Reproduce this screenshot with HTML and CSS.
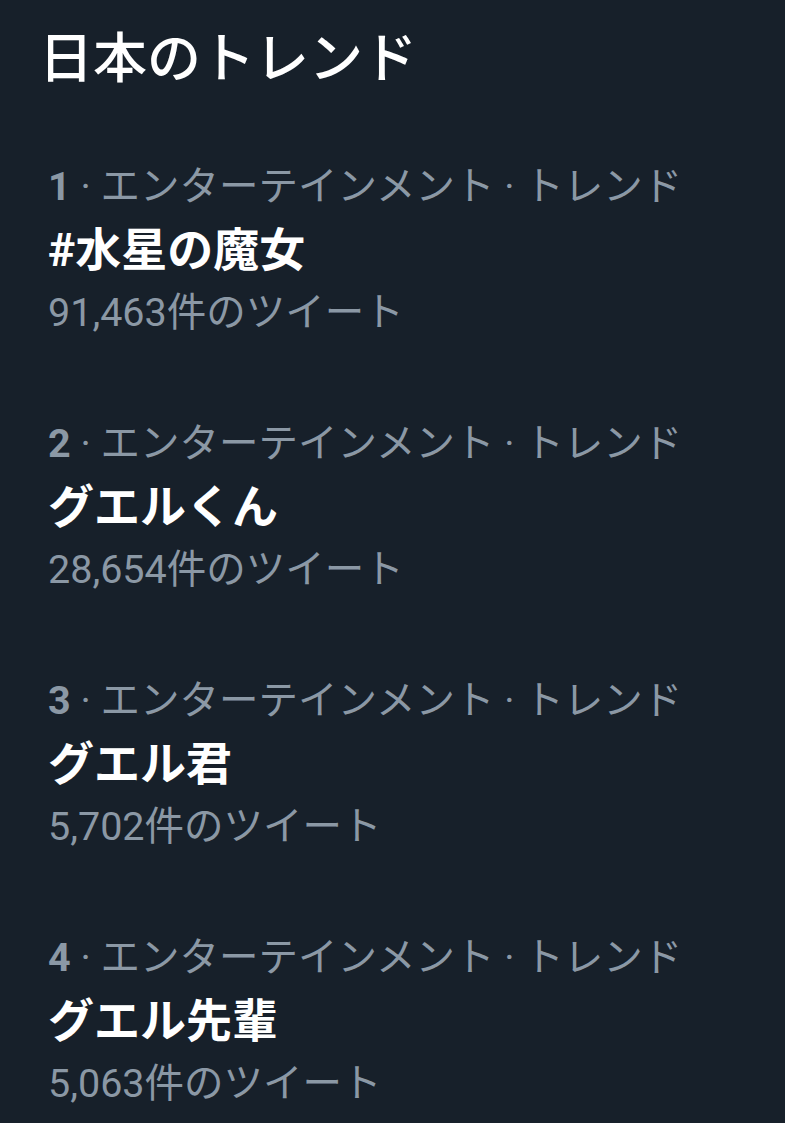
FILE: index.html
```html
<!DOCTYPE html>
<html lang="ja">
<head>
<meta charset="utf-8">
<link rel="stylesheet" href="styles.css">
</head>
<body>
<div class="page">
  <h1 class="title">日本のトレンド</h1>
  <ul class="trends">
    <li class="trend">
      <div class="meta"><span class="rank">1</span> · エンターテインメント · トレンド</div>
      <div class="name">#水星の魔女</div>
      <div class="count">91,463件のツイート</div>
    </li>
    <li class="trend">
      <div class="meta"><span class="rank">2</span> · エンターテインメント · トレンド</div>
      <div class="name">グエルくん</div>
      <div class="count">28,654件のツイート</div>
    </li>
    <li class="trend">
      <div class="meta"><span class="rank">3</span> · エンターテインメント · トレンド</div>
      <div class="name">グエル君</div>
      <div class="count">5,702件のツイート</div>
    </li>
    <li class="trend">
      <div class="meta"><span class="rank">4</span> · エンターテインメント · トレンド</div>
      <div class="name">グエル先輩</div>
      <div class="count">5,063件のツイート</div>
    </li>
  </ul>
</div>
</body>
</html>
```

FILE: styles.css
```css
html, body {
  margin: 0;
  padding: 0;
  background: #17202a;
}
body {
  font-family: Roboto, "Noto Sans CJK JP", sans-serif;
  color: #ffffff;
}
.page {
  width: 785px;
  height: 1123px;
  overflow: hidden;
}
.title {
  margin: 0;
  padding: 24px 0 0 39px;
  font-size: 54px;
  line-height: 72px;
  font-weight: 500;
}
.trends {
  list-style: none;
  margin: 0;
  padding: 61px 0 0 48px;
  display: flex;
  flex-direction: column;
  gap: 71px;
}
.trend {
  display: flex;
  flex-direction: column;
}
.meta {
  font-size: 39.5px;
  line-height: 60px;
  color: #8b98a5;
}
.rank {
  font-weight: 700;
}
.name {
  font-size: 46px;
  line-height: 66px;
  font-weight: 700;
}
.count {
  font-size: 39.5px;
  line-height: 60px;
  color: #8b98a5;
}
```
